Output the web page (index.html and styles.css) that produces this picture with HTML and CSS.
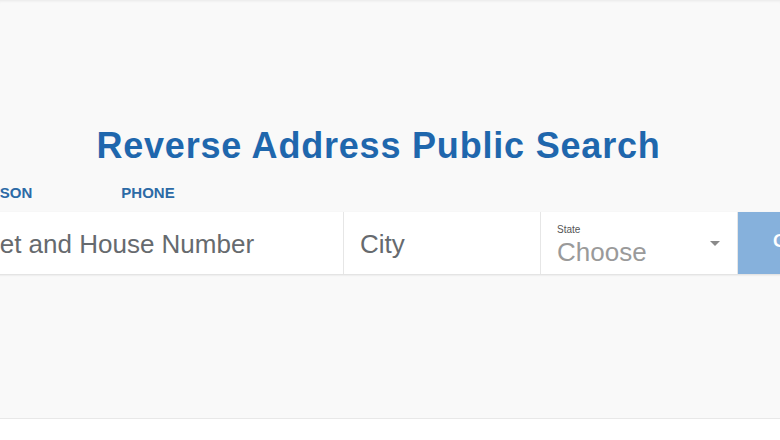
FILE: index.html
```html
<!DOCTYPE html>
<html>
<head>
<meta charset="utf-8">
<link rel="stylesheet" href="styles.css">
</head>
<body>
<div class="hero">
  <div class="container">
    <h1 class="title">Reverse Address Public Search</h1>
    <div class="tabs">
      <span class="tab">PERSON</span>
      <span class="tab">PHONE</span>
    </div>
    <div class="search">
      <div class="field street">Street and House Number</div>
      <div class="field city">City</div>
      <div class="field state">
        <div class="state-text">
          <div class="state-label">State</div>
          <div class="state-value">Choose</div>
        </div>
        <svg class="caret" width="10" height="5" viewBox="0 0 10 5"><path d="M0 0H10L5 5Z" fill="#8a8a8a"/></svg>
      </div>
      <div class="btn">GO</div>
    </div>
  </div>
</div>
</body>
</html>
```
FILE: styles.css
```css
html, body {
  margin: 0;
  padding: 0;
  background: #ffffff;
  overflow: hidden;
  width: 780px;
  height: 440px;
  font-family: "Liberation Sans", Arial, sans-serif;
}
.hero {
  height: 418px;
  background: #f9f9f9;
  border-bottom: 1px solid #e8e8e8;
  box-shadow: inset 0 3px 3px -2px rgba(0, 0, 0, 0.07);
  overflow: hidden;
}
.container {
  width: 855px;
  margin-left: -49px;
  padding-top: 128px;
}
.title {
  margin: 0;
  text-align: center;
  font-size: 36px;
  line-height: 36px;
  font-weight: 700;
  letter-spacing: 0.8px;
  color: #1f67ad;
}
.tabs {
  display: flex;
  gap: 89px;
  padding-left: 18px;
  margin-top: 21px;
}
.tab {
  font-size: 15px;
  line-height: 15px;
  font-weight: 700;
  color: #2c6aa6;
}
.search {
  display: flex;
  height: 62px;
  margin-top: 12px;
  box-shadow: 0 1px 2px rgba(0, 0, 0, 0.12);
}
.field {
  box-sizing: border-box;
  background: #ffffff;
  border-right: 1px solid #e6e6e6;
  padding-left: 16px;
  font-size: 26px;
  line-height: 62px;
  color: #666a6e;
  white-space: nowrap;
}
.street { width: 393px; padding-left: 1px; padding-top: 1px; }
.city { width: 197px; padding-top: 1px; }
.state {
  width: 197px;
  display: flex;
  align-items: center;
  padding-top: 3px;
  padding-right: 17px;
  line-height: normal;
}
.state-text {
  flex: 1;
  display: flex;
  flex-direction: column;
  gap: 2px;
}
.state-label {
  font-size: 10px;
  line-height: 12px;
  color: #555555;
}
.state-value {
  font-size: 26px;
  line-height: 28px;
  color: #9a9a9a;
}
.caret { display: block; margin-top: -3px; }
.btn {
  flex: 1;
  box-sizing: border-box;
  background: #86b1dc;
  color: #ffffff;
  font-size: 18px;
  font-weight: 700;
  line-height: 58px;
  padding-left: 35px;
  white-space: nowrap;
  overflow: hidden;
}
```
